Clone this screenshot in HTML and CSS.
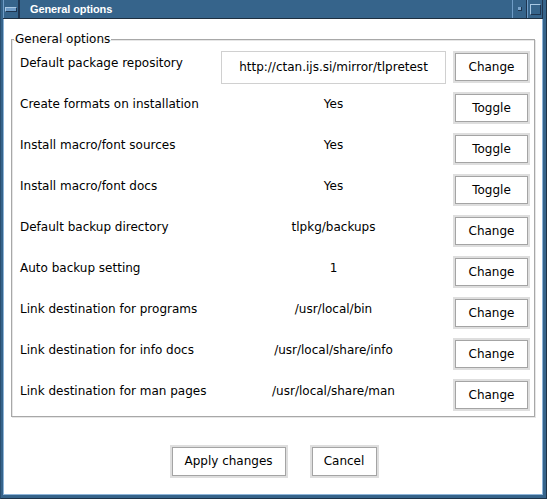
FILE: index.html
```html
<!DOCTYPE html>
<html>
<head>
<meta charset="utf-8">
<link rel="stylesheet" href="styles.css">
</head>
<body>
<div class="window">
  <div class="titlebar">
    <div class="tb-btn tb-menu"><span class="minus"></span></div>
    <div class="title">General options</div>
    <div class="tb-btn tb-iconify"><span class="dot"></span></div>
    <div class="tb-btn tb-max"><span class="square"></span></div>
  </div>
  <div class="client">
    <fieldset class="group">
      <legend>General options</legend>
      <div class="grid">
        <div class="label">Default package repository</div>
        <div class="value entry">http://ctan.ijs.si/mirror/tlpretest</div>
        <div class="btn">Change</div>

        <div class="label">Create formats on installation</div>
        <div class="value">Yes</div>
        <div class="btn">Toggle</div>

        <div class="label">Install macro/font sources</div>
        <div class="value">Yes</div>
        <div class="btn">Toggle</div>

        <div class="label">Install macro/font docs</div>
        <div class="value">Yes</div>
        <div class="btn">Toggle</div>

        <div class="label">Default backup directory</div>
        <div class="value">tlpkg/backups</div>
        <div class="btn">Change</div>

        <div class="label">Auto backup setting</div>
        <div class="value">1</div>
        <div class="btn">Change</div>

        <div class="label">Link destination for programs</div>
        <div class="value">/usr/local/bin</div>
        <div class="btn">Change</div>

        <div class="label">Link destination for info docs</div>
        <div class="value">/usr/local/share/info</div>
        <div class="btn">Change</div>

        <div class="label">Link destination for man pages</div>
        <div class="value">/usr/local/share/man</div>
        <div class="btn">Change</div>
      </div>
    </fieldset>
    <div class="actions">
      <div class="btn big apply">Apply changes</div>
      <div class="btn big cancel">Cancel</div>
    </div>
  </div>
</div>
</body>
</html>
```
FILE: styles.css
```css
html, body {
  margin: 0;
  padding: 0;
  background: #ffffff;
}
.window {
  width: 547px;
  height: 499px;
  box-sizing: border-box;
  background: #36648b;
  padding: 0 3px 3px 2px;
  display: flex;
  flex-direction: column;
  border-left: 1px solid #2a4f70;
  border-right: 1px solid #1c3248;
  border-bottom: 1px solid #1c3248;
}
.titlebar {
  height: 19px;
  box-sizing: border-box;
  display: flex;
  align-items: stretch;
  border-bottom: 1px solid #1e2f40;
  background: #36648b;
}
.tb-btn {
  width: 15px;
  box-sizing: border-box;
  border-left: 1px solid #6f9cc6;
  border-right: 1px solid #1e3550;
  display: flex;
  align-items: center;
  justify-content: center;
}
.tb-menu {
  width: 16px;
}
.minus {
  width: 10px;
  height: 3px;
  background: #6e9bc6;
  border: 1px solid #1e3550;
  border-top-color: #a9c8e4;
  border-left-color: #a9c8e4;
}
.dot {
  width: 3px;
  height: 3px;
  background: #7aa4cc;
  border-right: 1px solid #1e3550;
  border-bottom: 1px solid #1e3550;
}
.square {
  width: 9px;
  height: 9px;
  border: 1px solid #a9c8e4;
  border-right-color: #1e3550;
  border-bottom-color: #1e3550;
}
.title {
  flex: 1;
  color: #ffffff;
  font: bold 11px "Liberation Sans", Arial, sans-serif;
  line-height: 18px;
  padding-left: 10px;
  letter-spacing: -0.1px;
  border-left: 1px solid #1e3550;
}
.tb-max {
  width: 16px;
}
.client {
  flex: 1;
  background: #ffffff;
  border-left: 1px solid #8db4d8;
  border-right: 1px solid #8db4d8;
  border-bottom: 1px solid #8db4d8;
  font: 12px "DejaVu Sans", sans-serif;
  color: #000000;
  display: flex;
  flex-direction: column;
  padding: 13px 7px 0 7px;
}
.group {
  margin: 0;
  border: 1px solid #a8a8a8;
  box-shadow: 1px 1px 0 #e6e6e6, inset 1px 1px 0 #e6e6e6;
  padding: 5px 4px 4px 8px;
  height: 385px;
  box-sizing: border-box;
}
legend {
  padding: 0 1px;
  margin-left: -6px;
  line-height: 14px;
}
.grid {
  display: grid;
  grid-template-columns: 201px 225px 84px;
  grid-auto-rows: 41px;
  column-gap: 0;
  margin-top: 0;
  align-items: start;
}
.label {
  line-height: 33px;
  margin-top: -4px;
  white-space: nowrap;
}
.value {
  text-align: center;
  line-height: 33px;
  margin-top: -4px;
  white-space: nowrap;
}
.entry {
  margin-top: 0;
  height: 33px;
  box-sizing: border-box;
  border: 1px solid #d0d0d0;
  line-height: 31px;
}
.btn {
  height: 32px;
  box-sizing: border-box;
  border: 2px solid #dedede;
  box-shadow: inset 0 0 0 1px #a4a4a4;
  text-align: center;
  line-height: 28px;
  white-space: nowrap;
}
.grid .btn {
  margin-left: 7px;
}
.actions {
  display: flex;
  justify-content: center;
  gap: 22px;
  margin-top: 28px;
  padding-left: 2px;
}
.big {
  height: 33px;
  line-height: 29px;
}
.apply {
  width: 118px;
}
.cancel {
  width: 69px;
}
```
